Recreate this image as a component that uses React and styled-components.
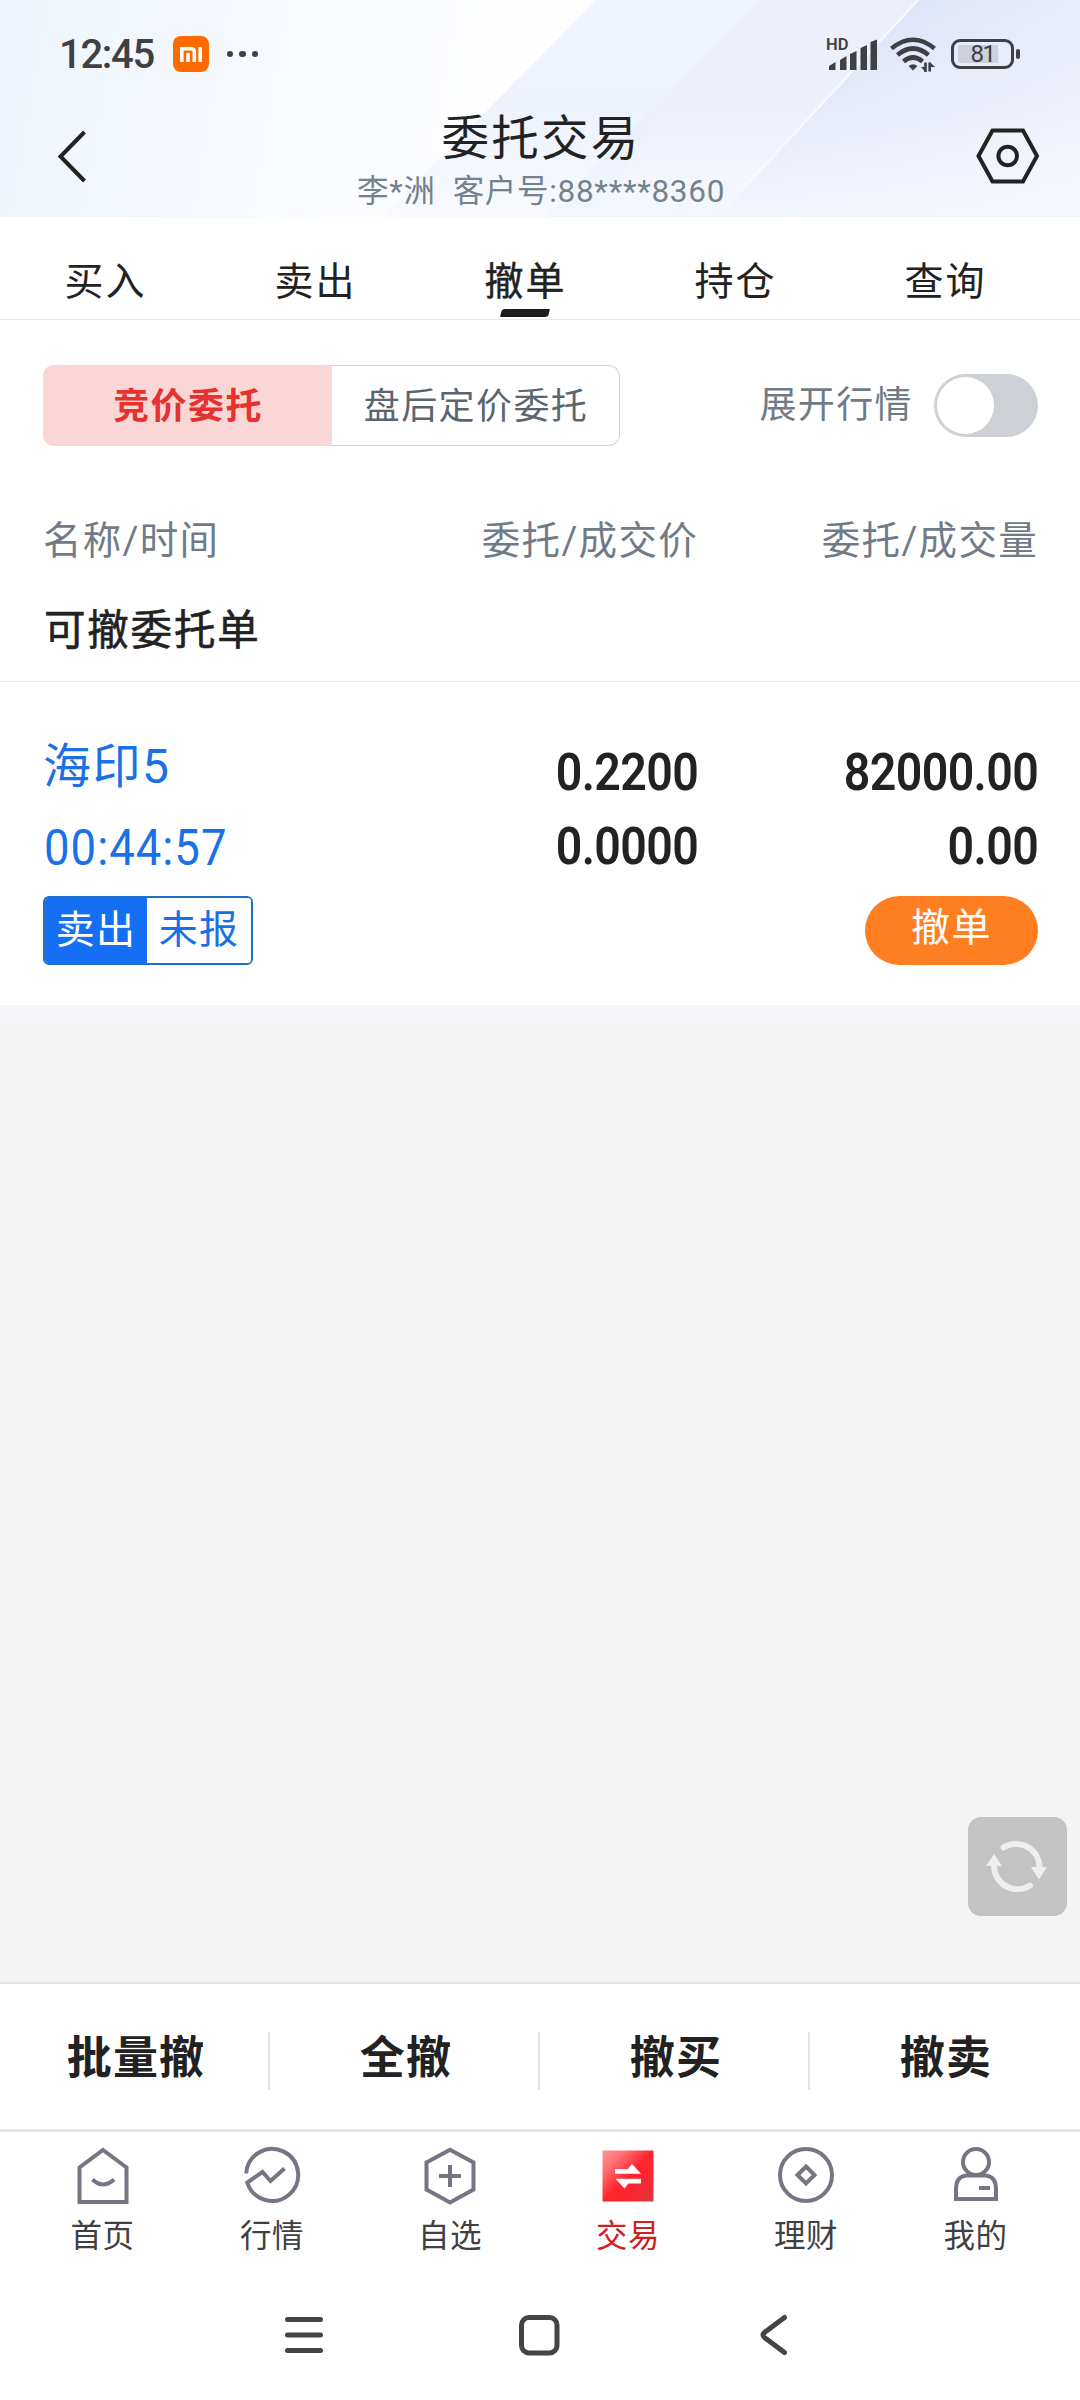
import React from "react";
import styled, { createGlobalStyle, css } from "styled-components";

const sans = `Roboto, "Noto Sans CJK SC", sans-serif`;

const GlobalStyle = createGlobalStyle`
  * { box-sizing: border-box; }
  body { margin: 0; background: #fff; font-family: ${sans}; color: #222; }
  button { border: 0; background: none; padding: 0; font: inherit; color: inherit; letter-spacing: inherit; }
`;

const Screen = styled.div`
  width: 1080px;
  height: 2400px;
  display: flex;
  flex-direction: column;
  background: #fff;
  overflow: hidden;
  white-space: nowrap;
`;

/* ---------- header ---------- */
const Header = styled.header`
  position: relative;
  height: 217px;
  flex: none;
  isolation: isolate;
  background: linear-gradient(100deg, #eff4fc 0%, #f5f9fe 22%, #fefeff 46%);
`;

const Rays = styled.svg`
  position: absolute;
  inset: 0;
  z-index: -1;
`;

const StatusBar = styled.div`
  height: 108px;
  display: flex;
  align-items: center;
  justify-content: space-between;
  padding: 0 60px 0 59px;
  color: #3e4043;
`;

const StatusGroup = styled.div`
  display: flex;
  align-items: center;
`;

const Clock = styled.span`
  width: 114px;
  padding-top: 1px;
  font-size: 40px;
  line-height: 44px;
  font-weight: 500;
  letter-spacing: -1.3px;
`;

const MiBadge = styled.span`
  width: 36px;
  height: 36px;
  border-radius: 8px;
  background: #ff6a00;
  display: flex;
  align-items: center;
  justify-content: center;
`;

const Dots = styled.span`
  display: flex;
  gap: 6px;
  margin-left: 18px;
  i {
    width: 6.4px;
    height: 6.4px;
    border-radius: 50%;
    background: #3e4043;
  }
`;

const SignalBox = styled.span`
  position: relative;
  display: flex;
  width: 51px;
  height: 36px;
  margin-right: 12px;
`;

const HdMark = styled.span`
  position: absolute;
  left: -1px;
  top: 1px;
  font-size: 16.5px;
  line-height: 16px;
  font-weight: 600;
`;

const Battery = styled.span`
  width: 63px;
  height: 30px;
  margin-left: 15px;
  border: 3px solid #3e4043;
  border-radius: 9px;
  padding: 3px 4px;
  display: flex;
`;

const BatteryLevel = styled.span`
  width: 49px;
  height: 18px;
  border-radius: 3px;
  background: linear-gradient(90deg, #cdd1dc 0 81%, transparent 81%);
  font-size: 24px;
  line-height: 19px;
  font-weight: 400;
  letter-spacing: -1.4px;
  text-align: center;
`;

const BatteryTip = styled.span`
  width: 4px;
  height: 10px;
  margin-left: 2px;
  border-radius: 2px;
  background: #3e4043;
`;

const TitleBar = styled.div`
  height: 109px;
  display: flex;
  justify-content: space-between;
  padding: 0 40px 0 42px;
`;

const IconButton = styled.button`
  width: 64px;
  height: 95px;
  display: flex;
  align-items: center;
  justify-content: center;
`;

const TitleBlock = styled.div`
  padding-top: 1px;
  text-align: center;
`;

const Title = styled.h1`
  margin: 0;
  font-size: 47.5px;
  line-height: 60px;
  font-weight: 400;
  letter-spacing: 2.2px;
`;

const Subtitle = styled.div`
  padding-top: 2px;
  font-size: 31.5px;
  line-height: 42px;
  letter-spacing: 0.7px;
  color: #75818d;
`;

/* ---------- order tabs ---------- */
const Tabs = styled.nav`
  height: 103px;
  flex: none;
  display: flex;
  border-bottom: 1px solid #e8e8e8;
`;

const Tab = styled.button`
  position: relative;
  width: 210px;
  height: 102px;
  padding: 29px 0 0 1px;
  display: flex;
  justify-content: center;
  font-size: 39px;
  line-height: 72px;
  letter-spacing: 2px;
  font-weight: 400;
  ${(p) =>
    p.$active &&
    css`
      -webkit-text-stroke: 0.4px currentColor;
      &::after {
        content: "";
        position: absolute;
        left: 81px;
        bottom: 2px;
        width: 48px;
        height: 8px;
        border-radius: 3px 1px;
        transform: skewX(-14deg);
        background: #1c1c1c;
      }
    `}
`;

/* ---------- filters ---------- */
const FilterRow = styled.div`
  flex: none;
  margin-top: 45px;
  padding: 0 42px 0 43px;
  height: 81px;
  display: flex;
  align-items: center;
  justify-content: space-between;
`;

const Segmented = styled.div`
  width: 577px;
  height: 81px;
  display: flex;
  border-radius: 11px;
  overflow: hidden;
`;

const Segment = styled.button`
  width: ${(p) => (p.$active ? 289 : 288)}px;
  font-size: 36px;
  line-height: 60px;
  letter-spacing: 1.4px;
  padding: 2px 0 0 1px;
  ${(p) =>
    p.$active
      ? css`
          background: #fad6d6;
          color: #e5322f;
          font-weight: 700;
        `
      : css`
          border: 1px solid #d0d0d0;
          border-left: 0;
          border-radius: 0 11px 11px 0;
          color: #5b6570;
        `}
`;

const ToggleLabel = styled.label`
  display: flex;
  align-items: center;
  gap: 21px;
  font-size: 37px;
  line-height: 60px;
  letter-spacing: 1.4px;
  color: #707b87;
`;

const Toggle = styled.span`
  width: 104px;
  height: 63px;
  border-radius: 32px;
  background: #cdd0d5;
  padding: 3px;
  i {
    display: block;
    width: 57px;
    height: 57px;
    border-radius: 50%;
    background: #fff;
  }
`;

/* ---------- order table ---------- */
const TableGrid = styled.div`
  flex: none;
  display: grid;
  grid-template-columns: 357px 298px 340px;
  padding: 0 42px 0 43px;
`;

const TableHead = styled(TableGrid)`
  margin-top: 65px;
  height: 60px;
  font-size: 38.5px;
  line-height: 60px;
  letter-spacing: 1.3px;
  color: #707b87;
`;

const HeadCell = styled.span`
  text-align: ${(p) => (p.$start ? "left" : "right")};
`;

const SectionTitle = styled.h2`
  flex: none;
  margin: 0;
  height: 111px;
  padding: 30px 0 0 44px;
  border-bottom: 1px solid #ebebeb;
  font-size: 41.5px;
  line-height: 60px;
  font-weight: 400;
  -webkit-text-stroke: 0.6px currentColor;
  letter-spacing: 1.8px;
`;

const Order = styled(TableGrid)`
  height: 323px;
  padding-top: 55px;
`;

const OrderInfo = styled.div`
  display: flex;
  flex-direction: column;
  align-items: flex-start;
  color: #1b70e8;
`;

const StockName = styled.div`
  font-size: 48px;
  line-height: 60px;
  letter-spacing: 1.5px;
`;

const OrderTime = styled.div`
  margin: 21px 0 18px 1px;
  font-size: 50px;
  line-height: 60px;
  letter-spacing: 1.1px;
  transform: scaleX(0.91);
  transform-origin: left;
`;

const StatusTag = styled.div`
  width: 210px;
  height: 69px;
  display: flex;
  border: 2px solid #1f6fc8;
  border-radius: 6px;
  overflow: hidden;
`;

const TagPart = styled.span`
  width: ${(p) => (p.$filled ? 102 : 104)}px;
  height: 65px;
  text-align: center;
  font-size: 39px;
  line-height: 64px;
  letter-spacing: 1.2px;
  background: ${(p) => (p.$filled ? "#156ff5" : "#fff")};
  color: ${(p) => (p.$filled ? "#fff" : "#1b70e8")};
`;

const Figures = styled.div`
  display: flex;
  flex-direction: column;
  align-items: flex-end;
  padding-top: 6px;
`;

const Figure = styled.div`
  height: 74px;
  font-size: 52px;
  line-height: 60px;
  font-weight: 600;
  letter-spacing: -0.7px;
  transform: scaleX(0.895);
  transform-origin: right;
`;

const CancelButton = styled.button`
  width: 173px;
  height: 69px;
  margin-top: 5px;
  border-radius: 35px;
  background: #ff7e22;
  color: #fff;
  font-size: 39px;
  line-height: 64px;
  letter-spacing: 1.6px;
  padding-bottom: 5px;
`;

const EmptyArea = styled.main`
  position: relative;
  flex: 1;
  background: linear-gradient(#f3f5f9 0 15px, #f4f4f4 15px);
`;

const RefreshButton = styled.button`
  position: absolute;
  top: 812px;
  right: 13px;
  width: 99px;
  height: 99px;
  border-radius: 13px;
  background: #c3c3c3;
`;

/* ---------- bottom ---------- */
const Actions = styled.div`
  flex: none;
  height: 150px;
  display: flex;
  border-top: 2px solid #e4e4e4;
  border-bottom: 3px solid #e4e4e4;
`;

const Action = styled.button`
  width: 270px;
  height: 145px;
  display: flex;
  justify-content: center;
  padding: 2px 0 0 2px;
  font-size: 45px;
  font-weight: 700;
  letter-spacing: 1.2px;
  line-height: 145px;
  background: ${(p) =>
    p.$divided ? "linear-gradient(#e2e2e2, #e2e2e2) 100% 48px / 2px 58px no-repeat" : "none"};
`;

const AppTabs = styled.nav`
  flex: none;
  height: 138px;
  padding: 14px 0 0 22px;
  display: grid;
  grid-template-columns: 161px repeat(4, 178px) 161px;
`;

const AppTab = styled.button`
  display: flex;
  flex-direction: column;
  align-items: center;
  justify-content: flex-start;
  gap: 11px;
  font-size: 31.5px;
  line-height: 40px;
  letter-spacing: 0.6px;
  color: ${(p) => (p.$active ? "#d1201d" : "#3f4042")};
  svg {
    display: block;
  }
`;

const SystemNav = styled.div`
  flex: none;
  height: 130px;
  display: flex;
  align-items: center;
  gap: 175px;
  padding-left: 274px;
`;

const Line = ({ children, size = 60, color = "#747783", width = 4 }) => (
  <svg width={size} height={size} viewBox={`0 0 ${size} ${size}`} fill="none" stroke={color} strokeWidth={width}>
    {children}
  </svg>
);

const appTabs = [
  {
    label: "首页",
    icon: (
      <Line>
        <path d="M30 4 L53.5 21.5 V56 H6.500 V21.500 Z" />
        <path d="M19.500 33.500 Q30 43.500 41 33.500" />
      </Line>
    ),
  },
  {
    label: "行情",
    icon: (
      <Line>
        <path d="M4.200 27.500 A26 26 0 1 1 5.300 36.500 L20.500 26 L28.500 35 L42.500 22.500" />
      </Line>
    ),
  },
  {
    label: "自选",
    icon: (
      <Line>
        <path d="M30 3.800 L53.500 16.500 V43.500 L30 56.500 L6.500 43.500 V16.500 Z" />
        <path d="M19 30 H41 M30 19 V41" />
      </Line>
    ),
  },
  {
    label: "交易",
    active: true,
    icon: (
      <svg width="60" height="60" viewBox="0 0 60 60">
        <defs>
          <linearGradient id="trade" x1="0" y1="0" x2="1" y2="1">
            <stop offset="0" stopColor="#ff9394" />
            <stop offset="0.22" stopColor="#ff7275" />
            <stop offset="0.5" stopColor="#ff242d" />
            <stop offset="0.7" stopColor="#f9262f" />
            <stop offset="1" stopColor="#dd3a3c" />
          </linearGradient>
        </defs>
        <rect x="4.500" y="4.500" width="51" height="51" fill="url(#trade)" />
        <path d="M17 23 H30 L34 17.700 L43 27.800 H17 Z M17.500 32.700 H43 V37.500 H30.500 L26.500 42.500 Z" fill="#fff" />
      </svg>
    ),
  },
  {
    label: "理财",
    icon: (
      <Line>
        <circle cx="30" cy="29" r="26" />
        <path d="M30 20.500 L38.500 29 L30 37.500 L21.500 29 Z" />
      </Line>
    ),
  },
  {
    label: "我的",
    icon: (
      <Line>
        <ellipse cx="30" cy="16" rx="13" ry="13" />
        <path d="M10 53 V43 Q10 29.500 22 29.500 H38 Q50 29.500 50 43 V53 Z" />
        <path d="M33 42 H44" />
      </Line>
    ),
  },
];

const orderTabs = ["买入", "卖出", "撤单", "持仓", "查询"];
const actions = ["批量撤", "全撤", "撤买", "撤卖"];

export default function App() {
  return (
    <Screen>
      <GlobalStyle />
      <Header>
        <Rays width="1080" height="217" viewBox="0 0 1080 217">
          <defs>
            <linearGradient id="fadeA" x1="0" y1="0" x2="0" y2="1">
              <stop offset="0" stopColor="#eff5fc" />
              <stop offset="0.5" stopColor="#eef2fc" />
              <stop offset="1" stopColor="#f8fafe" />
            </linearGradient>
            <linearGradient id="fadeB" x1="0" y1="0" x2="0" y2="1">
              <stop offset="0" stopColor="#eceffa" />
              <stop offset="0.6" stopColor="#edf0fb" />
              <stop offset="1" stopColor="#f4f7fd" />
            </linearGradient>
            <linearGradient id="fadeC" gradientUnits="userSpaceOnUse" x1="900" y1="10" x2="1020" y2="217">
              <stop offset="0" stopColor="#dfe5f9" />
              <stop offset="0.4" stopColor="#e8ecfa" />
              <stop offset="1" stopColor="#f2f5fc" />
            </linearGradient>
            <linearGradient id="fadeMask" x1="0" y1="0" x2="0" y2="1">
              <stop offset="0" stopColor="#f4f7fd" stopOpacity="0" />
              <stop offset="0.5" stopColor="#f4f7fd" stopOpacity="0.1" />
              <stop offset="1" stopColor="#f4f7fd" stopOpacity="0.85" />
            </linearGradient>
          </defs>
          <path d="M596 0 H1080 V217 H382 Z" fill="url(#fadeA)" />
          <path d="M760 0 H1080 V217 H545 Z" fill="url(#fadeB)" />
          <path d="M919 0 H1080 V217 H718 Z" fill="url(#fadeC)" />
          <path d="M718 0 H1080 V217 H600 Z" fill="url(#fadeMask)" />
          <path d="M918 0 L742 190" stroke="#f8faff" strokeWidth="2" />
        </Rays>
        <StatusBar>
          <StatusGroup>
            <Clock>12:45</Clock>
            <MiBadge>
              <svg width="22" height="15" viewBox="0 0 22 15" fill="none" stroke="#fff" strokeWidth="3.600">
                <path d="M1.800 15 V1.800 H11 Q14.300 1.800 14.300 5 V15 M8 6 V15 M20.200 0 V15" />
              </svg>
            </MiBadge>
            <Dots>
              <i />
              <i />
              <i />
            </Dots>
          </StatusGroup>
          <StatusGroup>
            <SignalBox>
              <HdMark>HD</HdMark>
              <svg width="51" height="36" viewBox="0 0 51 36" fill="#3e4043">
                <path d="M2 34 V30 L8.500 26 V34 Z M13 34 V24 L19.500 20 V34 Z M23 34 V18 L29.500 15 V34 Z M33.500 34 V12 L40 9 V34 Z M43.500 34 V6 L50 3.500 V34 Z" />
              </svg>
            </SignalBox>
            <svg width="46" height="36" viewBox="0 0 46 36" fill="none" stroke="#3e4043" strokeWidth="4.600">
              <path d="M1.500 12.500 Q23 -5 44.500 12.500 M7.500 19 Q23 6 38.500 19 M13.500 25.500 Q23 17.500 32.500 25.500" />
              <path d="M18.500 30 Q23 26.500 27.500 30 L23 34.500 Z" fill="#3e4043" stroke="none" />
              <path d="M35.500 26.500 V36 M39.700 35.500 V26.500" strokeWidth="2.600" />
              <path d="M31 31 L35.500 36 V31 Z M39.700 26 L45 31 H39.700 Z" fill="#3e4043" stroke="none" />
            </svg>
            <Battery>
              <BatteryLevel>81</BatteryLevel>
            </Battery>
            <BatteryTip />
          </StatusGroup>
        </StatusBar>
        <TitleBar>
          <IconButton aria-label="返回">
            <Line size={64} color="#222" width={4}>
              <path d="M42.500 8 L18.500 32.500 L42.500 57" />
            </Line>
          </IconButton>
          <TitleBlock>
            <Title>委托交易</Title>
            <Subtitle>李*洲&nbsp; 客户号:88****8360</Subtitle>
          </TitleBlock>
          <IconButton aria-label="设置">
            <Line size={64} color="#222" width={4}>
              <path d="M16.500 6.500 H47 L61 32 L47 57.500 H16.500 L2.500 32 Z" />
              <circle cx="31.700" cy="32" r="9.300" />
            </Line>
          </IconButton>
        </TitleBar>
      </Header>

      <Tabs>
        {orderTabs.map((t) => (
          <Tab key={t} $active={t === "撤单"}>
            {t}
          </Tab>
        ))}
      </Tabs>

      <FilterRow>
        <Segmented>
          <Segment $active>竞价委托</Segment>
          <Segment>盘后定价委托</Segment>
        </Segmented>
        <ToggleLabel>
          展开行情
          <Toggle>
            <i />
          </Toggle>
        </ToggleLabel>
      </FilterRow>

      <TableHead>
        <HeadCell $start>名称/时间</HeadCell>
        <HeadCell>委托/成交价</HeadCell>
        <HeadCell>委托/成交量</HeadCell>
      </TableHead>
      <SectionTitle>可撤委托单</SectionTitle>

      <Order>
        <OrderInfo>
          <StockName>海印5</StockName>
          <OrderTime>00:44:57</OrderTime>
          <StatusTag>
            <TagPart $filled>卖出</TagPart>
            <TagPart>未报</TagPart>
          </StatusTag>
        </OrderInfo>
        <Figures>
          <Figure>0.2200</Figure>
          <Figure>0.0000</Figure>
        </Figures>
        <Figures>
          <Figure>82000.00</Figure>
          <Figure>0.00</Figure>
          <CancelButton>撤单</CancelButton>
        </Figures>
      </Order>

      <EmptyArea>
        <RefreshButton aria-label="刷新">
          <svg width="99" height="99" viewBox="0 0 99 99" fill="none" stroke="#eee" strokeWidth="6" strokeLinecap="round">
            <path d="M35.500 30.500 A23.500 23.500 0 0 1 71.500 50" />
            <path d="M62 68.500 A23.500 23.500 0 0 1 26 48" />
            <path d="M63 50 H79 L71 62.500 Z M18 49 H34 L26 37 Z" fill="#eee" stroke="none" />
          </svg>
        </RefreshButton>
      </EmptyArea>

      <Actions>
        {actions.map((a, i) => (
          <Action key={a} $divided={i < actions.length - 1}>
            {a}
          </Action>
        ))}
      </Actions>

      <AppTabs>
        {appTabs.map((t) => (
          <AppTab key={t.label} $active={t.active}>
            {t.icon}
            {t.label}
          </AppTab>
        ))}
      </AppTabs>

      <SystemNav>
        <Line color="#444" width={5}>
          <path d="M13.500 14.500 H46.500 M13.500 30 H46.500 M13.500 45.500 H46.500" strokeLinecap="round" />
        </Line>
        <Line color="#444" width={5}>
          <rect x="12.500" y="12.500" width="35.500" height="35.500" rx="7.500" />
        </Line>
        <Line color="#444" width={5}>
          <path d="M40.500 12.500 L20.500 27.500 Q17.500 30 20.500 32.500 L40.500 47.500" strokeLinecap="round" />
        </Line>
      </SystemNav>
    </Screen>
  );
}
